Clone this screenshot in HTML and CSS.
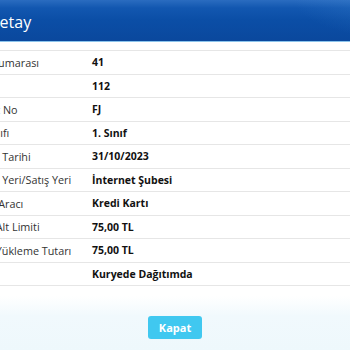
FILE: index.html
```html
<!DOCTYPE html>
<html lang="tr">
<head>
<meta charset="utf-8">
<link rel="stylesheet" href="styles.css">
</head>
<body>
<div class="modal">
  <div class="modal-header"><h2 class="modal-title">Detay</h2></div>
  <div class="modal-body">
    <div class="row"><div class="label">Başvuru Numarası</div><div class="value">41</div></div>
    <div class="row"><div class="label">TCKN</div><div class="value">112</div></div>
    <div class="row"><div class="label">Kimlik Kart No</div><div class="value">FJ</div></div>
    <div class="row"><div class="label">İndirim Sınıfı</div><div class="value">1. Sınıf</div></div>
    <div class="row"><div class="label">Satın Alma Tarihi</div><div class="value">31/10/2023</div></div>
    <div class="row"><div class="label">Satın Alma Yeri/Satış Yeri</div><div class="value">İnternet Şubesi</div></div>
    <div class="row"><div class="label">Kullanılan Aracı</div><div class="value">Kredi Kartı</div></div>
    <div class="row"><div class="label">Otomatik Alt Limiti</div><div class="value">75,00 TL</div></div>
    <div class="row"><div class="label">Otomatik Yükleme Tutarı</div><div class="value">75,00 TL</div></div>
    <div class="row"><div class="label">Durum</div><div class="value">Kuryede Dağıtımda</div></div>
  </div>
  <div class="modal-footer"><button class="btn-close">Kapat</button></div>
</div>
</body>
</html>
```
FILE: styles.css
```css
html, body {
  margin: 0;
  padding: 0;
  background: #ffffff;
  overflow: hidden;
  width: 350px;
  height: 350px;
}
body {
  font-family: "Open Sans", "Noto Sans", sans-serif;
  color: #333;
}
.modal {
  margin-left: -64px;
  width: 478px;
  height: 350px;
  display: flex;
  flex-direction: column;
}
.modal-header {
  height: 41px;
  background:
    radial-gradient(ellipse 120px 40px at 100% 0%, rgba(80, 150, 220, 0.35), rgba(80, 150, 220, 0) 100%),
    linear-gradient(180deg, #2a6cc0 0px, #1257b0 8px, #0b4ea6 20px, #0a489d 41px);
  border-bottom: 1px solid #8cc4ec;
  display: flex;
  align-items: center;
  padding-left: 52px;
  box-sizing: content-box;
}
.modal-title {
  margin: 0;
  font-size: 16px;
  font-weight: 400;
  color: #ffffff;
  line-height: 1;
  padding-top: 2px;
}
.modal-body {
  padding: 8px 0 0 10px;
}
.row {
  display: flex;
  align-items: center;
  height: 23.5px;
  border-top: 1px solid #e6e6e6;
  box-sizing: border-box;
}
.row:last-child {
  border-bottom: 1px solid #e6e6e6;
  height: 24.5px;
}
.label {
  width: 146px;
  flex: none;
  color: #333;
  font-size: 10.8px;
  white-space: nowrap;
}
.value {
  font-weight: 700;
  color: #111;
  font-size: 10.5px;
  white-space: nowrap;
}
.modal-footer {
  flex: 1;
  margin-top: 10px;
  background: linear-gradient(180deg, #ffffff 0px, #f1f9fd 20px, #eef8fc 100%);
  display: flex;
  justify-content: center;
  align-items: flex-start;
  padding-top: 20px;
}
.btn-close {
  width: 54px;
  height: 23px;
  border: none;
  border-radius: 3px;
  background: #40c8f0;
  color: #ffffff;
  font-family: "Open Sans", "Noto Sans", sans-serif;
  font-weight: 700;
  font-size: 11px;
  padding: 0;
}
```
